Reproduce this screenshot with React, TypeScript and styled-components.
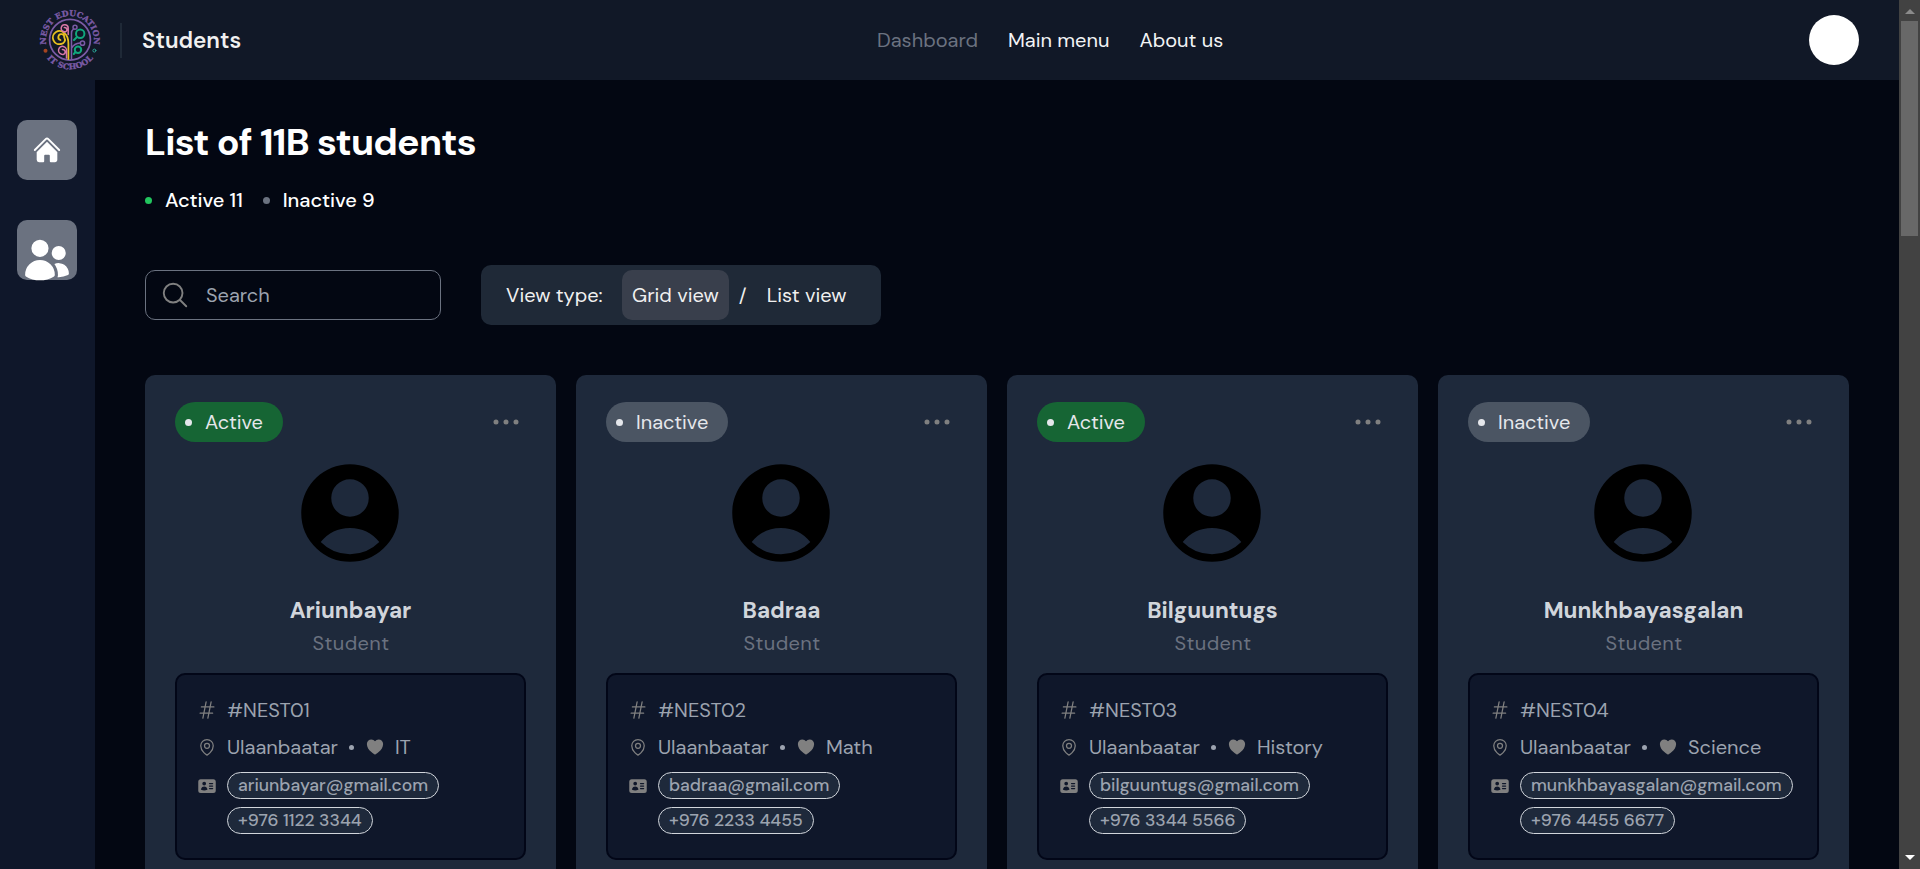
import React from "react";
import styled, { createGlobalStyle } from "styled-components";
import {
  HiHeart,
  HiHome,
  HiIdentification,
  HiOutlineEllipsisHorizontal,
  HiOutlineHashtag,
  HiOutlineMagnifyingGlass,
  HiOutlineMapPin,
  HiUserCircle,
  HiUsers,
} from "react-icons/hi2";

const GlobalStyle = createGlobalStyle`
  *, *::before, *::after { box-sizing: border-box; }
  body {
    margin: 0;
    background: #030712;
    color: #fff;
    font-family: "DM Sans", Inter, "Liberation Sans", sans-serif;
    font-size: 20px;
    line-height: 30px;
    overflow: hidden;
  }
  svg { display: block; flex-shrink: 0; }
`;

const Screen = styled.div`
  display: flex;
  height: 869px;
  overflow: hidden;
`;

const Shell = styled.div`
  flex: 1;
  min-width: 0;
  display: flex;
  flex-direction: column;
`;

/* Header */

const Header = styled.header`
  display: flex;
  justify-content: space-between;
  align-items: center;
  height: 80px;
  flex-shrink: 0;
  padding: 0 40px;
  background: #111827;
`;

const Brand = styled.div`
  display: flex;
  align-items: center;
`;

const Divider = styled.div`
  width: 2px;
  height: 35px;
  margin: 0 20px;
  background: #1f2937;
`;

const Section = styled.span`
  padding-top: 2px;
  font-size: 22.5px;
  font-weight: 600;
  color: #f0f0f0;
`;

const Nav = styled.nav`
  display: flex;
  gap: 30px;
  margin-left: 50px;
`;

const NavLink = styled.span<{ $muted?: boolean }>`
  color: ${(p) => (p.$muted ? "#6b7280" : "#f3f4f6")};
`;

const Profile = styled.div`
  width: 50px;
  height: 50px;
  border-radius: 50%;
  background: #fff;
`;

/* Body */

const Body = styled.div`
  flex: 1;
  min-height: 0;
  display: flex;
`;

const Sidebar = styled.aside`
  display: flex;
  flex-direction: column;
  align-items: center;
  gap: 40px;
  width: 95px;
  flex-shrink: 0;
  padding: 40px 1px 0 0;
  background: #0f172a;
`;

const SideButton = styled.div`
  display: flex;
  justify-content: center;
  width: 60px;
  height: 60px;
  padding-top: 15px;
  border-radius: 10px;
  background: #6b7280;
`;

const Main = styled.main`
  flex: 1;
  min-width: 0;
  padding: 41px 50px 0;
`;

const Title = styled.h1`
  margin: 0;
  font-size: 37.5px;
  font-weight: 700;
  line-height: 44px;
  letter-spacing: -0.78px;
`;

const Stats = styled.div`
  display: flex;
  gap: 20px;
  margin-top: 20px;
  font-weight: 500;
`;

const Stat = styled.div`
  display: flex;
  align-items: center;
  gap: 13px;
`;

const Dot = styled.span<{ $color: string }>`
  width: 7px;
  height: 7px;
  border-radius: 50%;
  background: ${(p) => p.$color};
`;

const Controls = styled.div`
  display: flex;
  align-items: center;
  gap: 40px;
  margin-top: 50px;
`;

const SearchBox = styled.div`
  display: flex;
  align-items: center;
  gap: 16px;
  width: 296px;
  height: 50px;
  padding-left: 14px;
  border: 1px solid #6b7280;
  border-radius: 10px;
  color: #9ca3af;
`;

const ViewSwitch = styled.div`
  display: flex;
  align-items: center;
  width: 400px;
  height: 60px;
  padding-left: 25px;
  border-radius: 10px;
  background: #1f2937;
  color: #f0f0f0;
`;

const ViewOption = styled.div<{ $active?: boolean }>`
  display: flex;
  align-items: center;
  height: 50px;
  padding: 0 10px;
  border-radius: 10px;
  background: ${(p) => (p.$active ? "#393f4c" : "transparent")};
`;

const ViewLabel = styled.div`
  width: 116px;
`;

const Slash = styled.span`
  width: 28px;
  padding-left: 10px;
`;

/* Cards */

const Grid = styled.div`
  display: grid;
  grid-template-columns: repeat(4, 1fr);
  gap: 20px;
  margin-top: 50px;
`;

const Card = styled.article`
  display: flex;
  flex-direction: column;
  height: 520px;
  padding: 27px 30px 0;
  border-radius: 10px;
  background: #1e293b;
`;

const CardTop = styled.div`
  display: flex;
  justify-content: space-between;
  align-items: center;
  color: #808080;
`;

const Badge = styled.div<{ $active: boolean }>`
  display: flex;
  align-items: center;
  gap: 13px;
  height: 40px;
  padding: 0 20px 0 10px;
  border-radius: 20px;
  background: ${(p) => (p.$active ? "#166534" : "#4b5563")};
  color: #e5e7eb;
`;

const Avatar = styled.div`
  align-self: center;
  margin: 11px 1px 0 0;
  color: #000;
`;

const Name = styled.h2`
  margin: 23px 0 0;
  font-size: 22.5px;
  font-weight: 700;
  text-align: center;
  color: #d1d5db;
`;

const Role = styled.div`
  margin-top: 2px;
  padding-left: 1px;
  letter-spacing: 0.4px;
  text-align: center;
  color: #6b7280;
`;

const Details = styled.div`
  height: 187px;
  margin-top: 15px;
  padding: 20px 20px 0;
  border: 2px solid #020617;
  border-radius: 10px;
  background: #0f172a;
  color: #9ca3af;
`;

const DetailRow = styled.div`
  display: flex;
  align-items: center;
  gap: 10px;
  height: 30px;
  margin-bottom: 7px;

  svg { color: #808080; }
`;

const Interest = styled.div`
  display: flex;
  align-items: center;
  gap: 10px;
  margin-left: 1px;
`;

const Bullet = styled.span`
  width: 5px;
  height: 5px;
  margin-right: 1px;
  border-radius: 50%;
  background: #9ca3af;
`;

const ContactRow = styled.div`
  display: flex;
  gap: 10px;
  margin-top: 10px;
  color: #808080;

  & > svg { margin-top: 4px; }
`;

const Contacts = styled.div`
  display: flex;
  flex-direction: column;
  align-items: flex-start;
  gap: 8px;
`;

const Pill = styled.span`
  height: 27px;
  padding: 0 10px;
  border: 1px solid #d1d5db;
  border-radius: 14px;
  background: #1e293b;
  color: #9ca3af;
  font-size: 17.5px;
  font-weight: 500;
  line-height: 25px;
  white-space: nowrap;
`;

/* Scrollbar */

const Scrollbar = styled.div`
  display: flex;
  flex-direction: column;
  align-items: center;
  width: 21px;
  flex-shrink: 0;
  padding: 9px 0;
  background: #424242;
`;

const Thumb = styled.div`
  width: 17px;
  height: 215px;
  margin: 7px 0 auto;
  background: #686868;
`;

const Arrow = styled.div<{ $down?: boolean }>`
  border: solid transparent;
  border-width: ${(p) => (p.$down ? "5px 5px 0" : "0 5px 5px")};
  border-top-color: ${(p) => (p.$down ? "#fff" : "transparent")};
  border-bottom-color: ${(p) => (p.$down ? "transparent" : "#8b8b8b")};
`;

type Student = {
  name: string;
  active: boolean;
  id: string;
  interest: string;
  email: string;
  phone: string;
};

const students: Student[] = [
  { name: "Ariunbayar", active: true, id: "#NEST01", interest: "IT", email: "ariunbayar@gmail.com", phone: "+976 1122 3344" },
  { name: "Badraa", active: false, id: "#NEST02", interest: "Math", email: "badraa@gmail.com", phone: "+976 2233 4455" },
  { name: "Bilguuntugs", active: true, id: "#NEST03", interest: "History", email: "bilguuntugs@gmail.com", phone: "+976 3344 5566" },
  { name: "Munkhbayasgalan", active: false, id: "#NEST04", interest: "Science", email: "munkhbayasgalan@gmail.com", phone: "+976 4455 6677" },
];

function Logo() {
  return (
    <svg width="60" height="60" viewBox="0 0 60 60" fill="none" strokeLinecap="round" overflow="visible">
      <defs>
        <path id="logo-top" d="M6.900 36.500A24 24 0 1 1 53.100 36.500" />
        <path id="logo-bottom" d="M3.500 43A29.600 29.600 0 0 0 56.500 43" />
      </defs>
      <g fill="#7b5ba6" stroke="#7b5ba6" strokeWidth="0.350" fontFamily="'DejaVu Serif', 'Liberation Serif', serif" fontWeight="700" fontSize="7.900">
        <text><textPath href="#logo-top" startOffset="50%" textAnchor="middle" textLength="84">NEST EDUCATION</textPath></text>
        <text><textPath href="#logo-bottom" startOffset="50%" textAnchor="middle" textLength="53">IT SCHOOL</textPath></text>
      </g>
      <circle cx="5.5" cy="40.7" r="2" fill="#a5431f" />
      <circle cx="54.4" cy="40.6" r="1.5" stroke="#2aa395" strokeWidth="1" />
      <circle cx="30" cy="29.8" r="20.4" stroke="#7b5ba6" strokeWidth="1.7" />
      <path
        d="M28.400 49V34C28.400 29 27.500 25.500 24.500 23.300A6.600 6.600 0 1 0 21 34A4.200 4.200 0 0 0 24.300 27.500A3 3 0 1 0 20.500 30"
        stroke="#e8c020"
        strokeWidth="1.800"
      />
      <g stroke="#d978a8" strokeWidth="1.500">
        <path d="M28.200 24.500V18.500A3.500 3.500 0 1 0 23.500 21.500A2.200 2.200 0 1 0 24.300 17.500" />
        <path d="M26.500 48V41A4 4 0 1 0 21.500 44.200A2.500 2.500 0 1 0 22.400 39.500" />
      </g>
      <g stroke="#7b5ba6" strokeWidth="1.500">
        <path d="M31.500 49V23Q31.500 20.500 33.500 19M31.800 38Q34 33.500 40 33" />
        <circle cx="35" cy="17.300" r="2" />
        <circle cx="42.500" cy="33.200" r="2.100" />
      </g>
      <g stroke="#11a67c" strokeWidth="2">
        <circle cx="40.200" cy="23.800" r="4.200" />
        <circle cx="38" cy="39.700" r="3.200" />
        <path d="M37 27L34 30M35.500 42L33.800 44" />
      </g>
    </svg>
  );
}

function StudentCard({ student }: { student: Student }) {
  return (
    <Card>
      <CardTop>
        <Badge $active={student.active}>
          <Dot $color="#e5e7eb" />
          <span>{student.active ? "Active" : "Inactive"}</span>
        </Badge>
        <HiOutlineEllipsisHorizontal size={40} />
      </CardTop>
      <Avatar>
        <HiUserCircle size={120} />
      </Avatar>
      <Name>{student.name}</Name>
      <Role>Student</Role>
      <Details>
        <DetailRow>
          <HiOutlineHashtag size={20} />
          <span>{student.id}</span>
        </DetailRow>
        <DetailRow>
          <HiOutlineMapPin size={20} />
          <span>Ulaanbaatar</span>
          <Interest>
            <Bullet />
            <HiHeart size={20} />
            <span>{student.interest}</span>
          </Interest>
        </DetailRow>
        <ContactRow>
          <HiIdentification size={20} />
          <Contacts>
            <Pill>{student.email}</Pill>
            <Pill>{student.phone}</Pill>
          </Contacts>
        </ContactRow>
      </Details>
    </Card>
  );
}

export default function App() {
  return (
    <Screen>
      <GlobalStyle />
      <Shell>
        <Header>
          <Brand>
            <Logo />
            <Divider />
            <Section>Students</Section>
          </Brand>
          <Nav>
            <NavLink $muted>Dashboard</NavLink>
            <NavLink>Main menu</NavLink>
            <NavLink>About us</NavLink>
          </Nav>
          <Profile />
        </Header>
        <Body>
          <Sidebar>
            <SideButton>
              <HiHome size={30} />
            </SideButton>
            <SideButton>
              <HiUsers size={50} />
            </SideButton>
          </Sidebar>
          <Main>
            <Title>List of 11B students</Title>
            <Stats>
              <Stat>
                <Dot $color="#22c55e" />
                <span>Active 11</span>
              </Stat>
              <Stat>
                <Dot $color="#6b7280" />
                <span>Inactive 9</span>
              </Stat>
            </Stats>
            <Controls>
              <SearchBox>
                <HiOutlineMagnifyingGlass size={30} color="#808080" />
                <span>Search</span>
              </SearchBox>
              <ViewSwitch>
                <ViewLabel>View type:</ViewLabel>
                <ViewOption $active>Grid view</ViewOption>
                <Slash>/</Slash>
                <ViewOption>List view</ViewOption>
              </ViewSwitch>
            </Controls>
            <Grid>
              {students.map((s) => (
                <StudentCard key={s.id} student={s} />
              ))}
            </Grid>
          </Main>
        </Body>
      </Shell>
      <Scrollbar>
        <Arrow />
        <Thumb />
        <Arrow $down />
      </Scrollbar>
    </Screen>
  );
}
